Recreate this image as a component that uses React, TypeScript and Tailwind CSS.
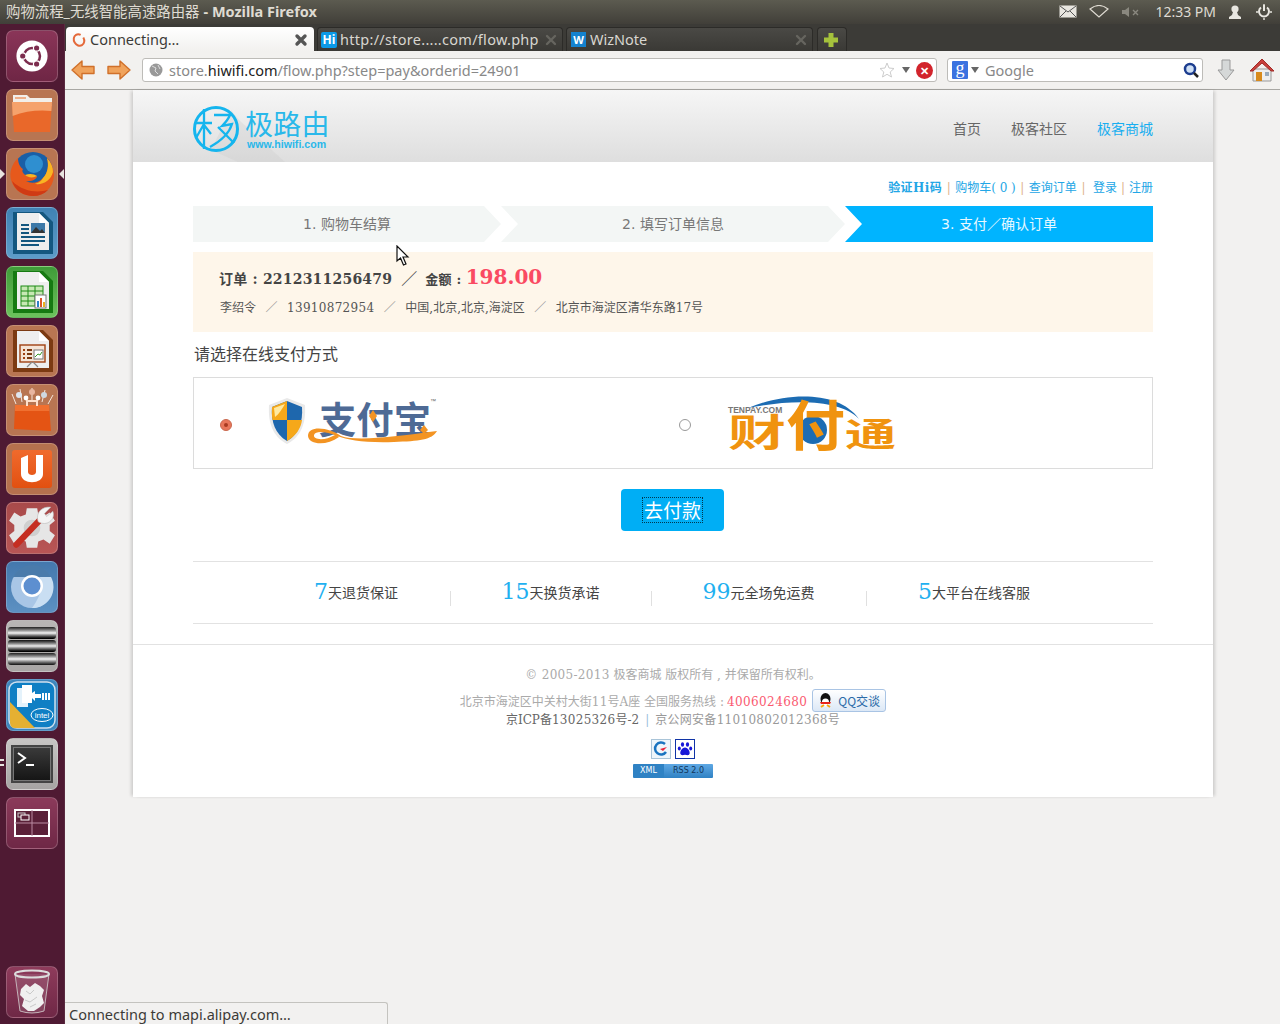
import React from "react";

function Tile({ cls, children, pip }: { cls: string; children: React.ReactNode; pip?: "ff" | "term" }) {
  return (
    <div className="relative w-full flex justify-center">
      {pip === "ff" && (
        <>
          <span className="absolute left-0 top-[21px] w-0 h-0 border-y-[5px] border-y-transparent border-l-[5px] border-l-[#e8e4e0]" />
          <span className="absolute right-0 top-[21px] w-0 h-0 border-y-[5px] border-y-transparent border-r-[5px] border-r-[#e8e4e0]" />
        </>
      )}
      {pip === "term" && (
        <span className="absolute left-0 top-[21px] w-[4px] h-[7px] border-y-2 border-[#e8e4e0]" />
      )}
      <div className={`w-[52px] h-[52px] rounded-[7px] flex items-center justify-center overflow-hidden border border-white/20 ${cls}`}>
        {children}
      </div>
    </div>
  );
}

function DocIcon({ dark, children }: { dark: string; children: React.ReactNode }) {
  return (
    <svg width="50" height="50" viewBox="0 0 50 50">
      <path d="M6 4H36L46 14V46H6Z" fill={dark} />
      <path d="M10 5H32L42 15V42H10Z" fill="#eeeeee" />
      <path d="M32 5L42 15H32Z" fill="#ffffff" />
      {children}
    </svg>
  );
}

function Launcher() {
  return (
    <aside className="w-[65px] shrink-0 bg-[#4f1a33] flex flex-col pt-[6px] pb-[6px] gap-[7px] border-r border-[#5a2a40]">
      <Tile cls="bg-gradient-to-b from-[#8a3558] to-[#6f2645]">
        <svg width="32" height="32" viewBox="0 0 38 38">
          <circle cx="19" cy="19" r="18.5" fill="#fff" />
          <circle cx="19" cy="19" r="9.5" fill="none" stroke="#7c2c4e" strokeWidth="3" />
          <circle cx="8" cy="19" r="3.8" fill="#7c2c4e" stroke="#fff" strokeWidth="1.4" />
          <circle cx="24.5" cy="9.5" r="3.8" fill="#7c2c4e" stroke="#fff" strokeWidth="1.4" />
          <circle cx="24.5" cy="28.5" r="3.8" fill="#7c2c4e" stroke="#fff" strokeWidth="1.4" />
        </svg>
      </Tile>
      <Tile cls="bg-[#b87552]">
        <svg width="46" height="42" viewBox="0 0 46 42">
          <path d="M4 1H18L21 4H43V12H4Z" fill="#f2efea" />
          <rect x="6" y="3" width="11" height="2" fill="#eeb08a" />
          <path d="M3 8H43L41 38H5Z" fill="#e9682a" />
          <path d="M3 8H43L42.4 17Q22 15 3.6 22Z" fill="#f5a26c" />
        </svg>
      </Tile>
      <Tile cls="bg-[#b87552]" pip="ff">
        <svg width="48" height="48" viewBox="0 0 48 48">
          <circle cx="25" cy="22" r="20" fill="#1a5fa6" />
          <circle cx="26" cy="14" r="9" fill="#2f8fd0" />
          <path d="M10 8C4 14 1 22 3 30C6 41 16 46 25 46C36 46 45 38 46 26C46 20 44 13 39 8C41 15 40 23 35 28C31 33 23 34 18 31C24 32 29 29 29 26C25 28 19 27 16 24C14 22 14 20 15 19C12 17 10 13 10 8Z" fill="#e6591c" />
          <path d="M39 8C41 15 40 23 35 28C33 32 29 33 27 34C36 35 43 30 45 22C45 17 43 12 39 8Z" fill="#f9b523" />
          <path d="M4 31C7 41 16 46 25 46C31 46 36 44 40 40C30 43 15 42 4 31Z" fill="#cf3a14" />
          <path d="M17 25C22 23 26 24 29 26C26 28 20 28 17 25Z" fill="#f9b523" />
        </svg>
      </Tile>
      <Tile cls="bg-gradient-to-b from-[#3f82b4] to-[#5d9cc9]">
        <DocIcon dark="#14577f">
          <rect x="14" y="16" width="8" height="2" fill="#14577f" />
          <rect x="14" y="20" width="8" height="2" fill="#14577f" />
          <rect x="14" y="24" width="8" height="2" fill="#14577f" />
          <rect x="24" y="15" width="14" height="10" fill="#3d79a8" />
          <path d="M24 25L29 19L33 23L35 21L38 25Z" fill="#333" />
          <rect x="14" y="28" width="24" height="2" fill="#14577f" />
          <rect x="14" y="32" width="24" height="2" fill="#14577f" />
          <rect x="14" y="36" width="18" height="2" fill="#14577f" />
        </DocIcon>
      </Tile>
      <Tile cls="bg-gradient-to-b from-[#3f9b38] to-[#6cc25c]">
        <DocIcon dark="#167a12">
          <rect x="14" y="19" width="22" height="20" fill="#c7e8b4" stroke="#1c8a14" />
          <path d="M14 24H36M14 29H36M14 34H36M21 19V39M28 19V39" stroke="#1c8a14" strokeWidth="1" />
          <rect x="28" y="28" width="11" height="13" fill="#fff" stroke="#777" />
          <rect x="30" y="34" width="2" height="6" fill="#2f80c8" />
          <rect x="33" y="31" width="2" height="9" fill="#d8562a" />
          <rect x="36" y="35" width="2" height="5" fill="#e8b020" />
        </DocIcon>
      </Tile>
      <Tile cls="bg-[#b87552]">
        <DocIcon dark="#7c3a12">
          <rect x="13" y="19" width="25" height="17" fill="#f5e4d6" stroke="#a04012" strokeWidth="1.4" />
          <rect x="16" y="23" width="2" height="2" fill="#a04012" />
          <rect x="16" y="27" width="2" height="2" fill="#a04012" />
          <rect x="16" y="31" width="2" height="2" fill="#a04012" />
          <rect x="20" y="23" width="5" height="2" fill="#7c3a12" />
          <rect x="20" y="27" width="5" height="2" fill="#7c3a12" />
          <rect x="20" y="31" width="5" height="2" fill="#7c3a12" />
          <rect x="27" y="24" width="9" height="9" fill="#fff" stroke="#777" />
          <path d="M28 31L31 28L33 29L35 26" stroke="#3a9a2a" fill="none" />
          <path d="M25 36L20 41M26 36L31 41" stroke="#888" strokeWidth="1.2" />
        </DocIcon>
      </Tile>
      <Tile cls="bg-[#b87552]">
        <svg width="48" height="48" viewBox="0 0 48 48">
          <path d="M8 18L4 8M14 16L12 3M24 15V2M34 16L37 4M40 18L45 9" stroke="#f5e6dc" strokeWidth="1" />
          <circle cx="11" cy="9" r="3" fill="#dfe6ef" />
          <circle cx="24" cy="6" r="3" fill="#e8b5a0" />
          <circle cx="36" cy="9" r="3" fill="#cfd8e0" />
          <circle cx="18" cy="12" r="2.4" fill="#fff" />
          <circle cx="30" cy="12" r="2.4" fill="#fff" />
          <path d="M7 19H41L43 45L6 43Z" fill="#e45414" />
          <path d="M7 19H41L41.4 25H7Z" fill="#f07030" />
          <path d="M19 20V15H29V20" fill="none" stroke="#ffe0cc" strokeWidth="2" />
        </svg>
      </Tile>
      <Tile cls="bg-[#b5714e]">
        <div className="w-[40px] h-[38px] rounded-[3px] bg-gradient-to-b from-[#f06a2c] to-[#e2500f] flex items-center justify-center">
          <svg width="26" height="30" viewBox="0 0 26 30">
            <path d="M2 4L9 1V18C9 22 17 22 17 18V1H24V20C24 31 2 31 2 20Z" fill="#fff" />
          </svg>
        </div>
      </Tile>
      <Tile cls="bg-gradient-to-b from-[#a84a4a] to-[#b85555]">
        <svg width="50" height="50" viewBox="0 0 48 48">
          <path d="M19 5H29L30 11L35 13L41 9L46 17L41 21V27L46 31L41 39L35 35L30 37L29 43H19L18 37L13 35L7 39L2 31L7 27V21L2 17L7 9L13 13L18 11Z" fill="#e6e6e6" />
          <circle cx="24" cy="24" r="8" fill="#cfcfcf" />
          <path d="M9 40L31 17" stroke="#c52e22" strokeWidth="6" strokeLinecap="round" />
          <path d="M30 18C27 10 33 3 42 4L36 10L38 13L44 8C47 16 38 23 30 18Z" fill="#f4f4f4" stroke="#bbb" strokeWidth="0.6" />
        </svg>
      </Tile>
      <Tile cls="bg-gradient-to-b from-[#4478ad] to-[#5c90c2]">
        <svg width="46" height="46" viewBox="0 0 46 46">
          <circle cx="23" cy="23" r="21" fill="#a9c6e6" />
          <path d="M4 13A21 21 0 0 1 42 13H23Z" fill="#4a7bab" />
          <path d="M23 44A21 21 0 0 0 42 13H31C35 24 30 34 23 44Z" fill="#c9def2" />
          <circle cx="23" cy="22" r="11" fill="#fff" />
          <circle cx="23" cy="22" r="8.5" fill="#5d8fd0" />
        </svg>
      </Tile>
      <Tile cls="bg-gradient-to-b from-[#b8b6b5] to-[#a9a6a5]">
        <div className="w-[48px] flex flex-col gap-[1px]">
          <div className="h-[12px] rounded-[3px] bg-gradient-to-b from-[#222] via-[#f5f5f5] to-[#000]" />
          <div className="h-[12px] rounded-[3px] bg-gradient-to-b from-[#111] via-[#eee] to-[#000]" />
          <div className="h-[12px] rounded-[3px] bg-gradient-to-b from-[#222] via-[#f5f5f5] to-[#111]" />
        </div>
      </Tile>
      <Tile cls="bg-[#3d86bd]">
        <svg width="50" height="50" viewBox="0 0 50 50">
          <rect x="2" y="2" width="46" height="46" rx="8" fill="#0f7fc4" stroke="#cfe0ee" strokeWidth="1.5" />
          <path d="M3 22L28 48H8Q3 48 3 42Z" fill="#e5b032" />
          <path d="M10 8H21V27H10Z" fill="#e4f2fb" />
          <path d="M15 5H25V23H15Z" fill="#fff" />
          <path d="M22 15L28 11V14H34V18H28V21Z" fill="#fff" />
          <path d="M36 13V20M39 13V20M42 13V20" stroke="#fff" strokeWidth="2" />
          <ellipse cx="35" cy="35" rx="11" ry="6.5" fill="none" stroke="#fff" />
          <text x="35" y="38" textAnchor="middle" fontSize="8" fill="#fff" fontFamily="Liberation Sans">intel</text>
        </svg>
      </Tile>
      <Tile cls="bg-gradient-to-b from-[#c7c5c4] to-[#a6a4a3]" pip="term">
        <div className="w-[42px] h-[38px] bg-[#777] border-2 border-[#444] p-[1px]">
          <div className="w-full h-full bg-gradient-to-b from-[#3a3a3a] to-[#161616] flex pt-[3px] pl-[3px]">
            <svg width="28" height="24" viewBox="0 0 28 24">
              <path d="M1 2L8 7L1 12" fill="none" stroke="#fff" strokeWidth="2" />
              <path d="M9 14H17" stroke="#fff" strokeWidth="2" />
            </svg>
          </div>
        </div>
      </Tile>
      <Tile cls="bg-gradient-to-b from-[#8b3a5a] to-[#6f2846]">
        <svg width="36" height="28" viewBox="0 0 36 28">
          <rect x="1" y="1" width="34" height="26" fill="#5a2038" stroke="#fff" strokeWidth="2" />
          <path d="M18 1V27M1 14H35" stroke="#b98aa0" strokeWidth="1" />
          <rect x="4" y="4" width="7" height="4" fill="none" stroke="#ccc" />
          <rect x="7" y="6" width="8" height="5" fill="#5a2038" stroke="#fff" />
        </svg>
      </Tile>
      <div className="mt-auto">
        <Tile cls="bg-gradient-to-b from-[#8e3b5b] to-[#6f2846]">
          <svg width="40" height="46" viewBox="0 0 38 46">
            <path d="M2 5L7 42Q19 46 31 42L36 5" fill="#c9a5b433" stroke="#c4b4ba" />
            <ellipse cx="19" cy="5" rx="17" ry="3.6" fill="none" stroke="#dcdcdc" strokeWidth="2" />
            <path d="M8 20L13 15L17 18L22 14L27 17L31 21L29 27L31 34L27 38L21 42H15L9 37L11 30L7 26Z" fill="#f0f0f0" />
            <path d="M13 22L17 25L21 21M12 31L17 33L24 28M17 38L23 35" stroke="#c9c9c9" fill="none" />
          </svg>
        </Tile>
      </div>
    </aside>
  );
}

function TabClose({ stroke, w }: { stroke: string; w: number }) {
  return (
    <svg width="14" height="14" viewBox="0 0 14 14" className="ml-auto">
      <path d="M3 3L11 11M11 3L3 11" stroke={stroke} strokeWidth={w} strokeLinecap="round" />
    </svg>
  );
}

function Tabs() {
  return (
    <div className="h-[27px] bg-[#3c3b37] flex items-end pl-[1px] gap-[3px] text-[14.5px] [font-family:'Noto_Sans',sans-serif]">
      <div className="w-[248px] h-[24px] rounded-t-[4px] bg-gradient-to-b from-white to-[#f2f1ef] flex items-center pl-[6px] pr-[6px] pt-[1px] text-[#3c3b37]">
        <svg width="14" height="16" viewBox="0 0 14 16" className="mr-[4px]">
          <ellipse cx="7" cy="8" rx="5" ry="6" fill="none" stroke="#e4693a" strokeWidth="2" strokeDasharray="30 5" transform="rotate(-30 7 8)" />
        </svg>
        <span>Connecting…</span>
        <TabClose stroke="#555" w={3.4} />
      </div>
      <div className="w-[246px] h-[24px] rounded-t-[4px] bg-gradient-to-b from-[#4a4945] to-[#3a3935] border border-b-0 border-[#2c2b28] flex items-center pl-[3px] pr-[4px] text-[#d8d6d0]">
        <span className="w-[16px] h-[16px] mr-[3px] rounded-[2px] bg-[#0b9ae8] text-white text-[12px] font-bold leading-[16px] text-center">Hi</span>
        <span className="tracking-[0.28px]">http://store.....com/flow.php</span>
        <TabClose stroke="#66655f" w={2.4} />
      </div>
      <div className="w-[247px] h-[24px] rounded-t-[4px] bg-gradient-to-b from-[#4a4945] to-[#3a3935] border border-b-0 border-[#2c2b28] flex items-center pl-[4px] pr-[4px] text-[#d8d6d0]">
        <span className="w-[15px] h-[15px] mr-[4px] bg-[#1482cf] text-white text-[11px] font-bold leading-[15px] text-center">W</span>
        <span>WizNote</span>
        <TabClose stroke="#66655f" w={2.4} />
      </div>
      <div className="ml-[1px] w-[30px] h-[24px] rounded-t-[4px] bg-gradient-to-b from-[#4a4945] to-[#3a3935] border border-b-0 border-[#2c2b28] flex items-center justify-center pr-[2px]">
        <svg width="16" height="16" viewBox="0 0 16 16">
          <path d="M5.5 1H10.5V5.5H15V10.5H10.5V15H5.5V10.5H1V5.5H5.5Z" fill="#a5c23c" />
        </svg>
      </div>
    </div>
  );
}

function Arrow({ flip }: { flip?: boolean }) {
  return (
    <svg width="24" height="20" viewBox="0 0 24 20" className={flip ? "-scale-x-100" : ""}>
      <path d="M11 1L1 10L11 19V13.5H23V6.5H11Z" fill="#f0a35c" stroke="#d0702a" strokeWidth="1.4" strokeLinejoin="round" />
    </svg>
  );
}

function Toolbar() {
  return (
    <div className="h-[39px] bg-[#f2f1ef] border-b border-[#a8a7a3] flex items-center pl-[6px] [font-family:'Noto_Sans',sans-serif] text-[14.5px]">
      <Arrow />
      <div className="ml-[12px]"><Arrow flip /></div>
      <div className="ml-[11px] w-[795px] h-[24px] bg-white border border-[#bdbcb8] rounded-[3px] flex items-center pl-[6px] pr-[3px]">
        <svg width="14" height="14" viewBox="0 0 14 14" className="mr-[6px]">
          <circle cx="7" cy="7" r="6.5" fill="#999" />
          <path d="M3 3L7 5L6 8L9 11M9 2L11 6" stroke="#ddd" fill="none" />
        </svg>
        <span className="text-[#888] translate-y-px">store.</span>
        <span className="text-[#222] translate-y-px">hiwifi.com</span>
        <span className="text-[#888] translate-y-px">/flow.php?step=pay&amp;orderid=24901</span>
        <svg width="18" height="18" viewBox="0 0 18 18" className="ml-auto">
          <path d="M9 2L11 7L16 7.5L12.2 11L13.5 16L9 13.3L4.5 16L5.8 11L2 7.5L7 7Z" fill="#fff" stroke="#ccc" />
        </svg>
        <span className="ml-[6px] w-0 h-0 border-x-[4px] border-x-transparent border-t-[6px] border-t-[#666]" />
        <span className="ml-[6px] w-[17px] h-[17px] rounded-full bg-[#d2242c] text-white text-[11px] font-bold leading-[17px] text-center">✕</span>
      </div>
      <div className="ml-[10px] w-[256px] h-[24px] bg-white border border-[#bdbcb8] rounded-[3px] flex items-center pl-[4px] pr-[2px]">
        <span className="w-[16px] h-[18px] rounded-[1px] bg-[#3a72e0] text-white text-[18px] leading-[15px] text-center [font-family:'Liberation_Serif',serif]">g</span>
        <span className="ml-[3px] w-0 h-0 border-x-[4px] border-x-transparent border-t-[6px] border-t-[#666]" />
        <span className="ml-[6px] text-[#888] translate-y-px">Google</span>
        <svg width="18" height="18" viewBox="0 0 18 18" className="ml-auto">
          <circle cx="8" cy="8" r="5" fill="#cfe0f5" stroke="#1c3d8f" strokeWidth="2.5" />
          <path d="M12 12L16 16" stroke="#222" strokeWidth="2.5" />
        </svg>
      </div>
      <svg width="20" height="24" viewBox="0 0 20 24" className="ml-[13px]">
        <path d="M6 2H14V12H18L10 22L2 12H6Z" fill="#d5d8d8" stroke="#999" />
      </svg>
      <svg width="26" height="24" viewBox="0 0 26 24" className="ml-[13px]">
        <path d="M4 11H22V23H4Z" fill="#eeeeee" stroke="#999" />
        <path d="M13 1L25 13L22 13L13 5L4 13L1 13Z" fill="#c8403c" stroke="#a02c28" />
        <rect x="7" y="14" width="6" height="9" fill="#d88a1c" />
        <rect x="16" y="14" width="4" height="4" fill="#9ab" />
      </svg>
    </div>
  );
}

function Logo() {
  return (
    <div className="relative flex items-center h-full pt-[6px]">
      <svg width="180" height="72" viewBox="0 0 180 72" className="absolute left-0 top-0">
        <path d="M38 20L46 30L92 72H45L18 60Z" fill="#c9c9c9" opacity="0.3" />
      </svg>
      <svg width="46" height="46" viewBox="0 0 46 46" className="relative">
        <circle cx="23" cy="23" r="21.5" fill="none" stroke="#15b5ee" strokeWidth="3" />
        <path d="M3 17H19M11 3V43M11 18L3 32M11 19L18 28M21 9H37C35 14 32 17 29 20L39 18C36 28 26 36 17 41M25 21L41 37" fill="none" stroke="#15b5ee" strokeWidth="2.3" />
      </svg>
      <div className="relative ml-[6px] flex flex-col items-start">
        <span className="text-[28px] leading-[30px] text-[#2ab8ea] tracking-[0.3px] [font-family:'Noto_Sans_CJK_SC',sans-serif]">极路由</span>
        <span className="ml-[2px] mt-[1px] text-[10.6px] leading-[11px] font-bold text-[#2ab8ea] [font-family:'Liberation_Sans',sans-serif]">www.hiwifi.com</span>
      </div>
    </div>
  );
}

function Step({ children, cls, clip }: { children: React.ReactNode; cls: string; clip: string }) {
  return <div className={`h-[36px] flex items-center justify-center ${cls} ${clip}`}>{children}</div>;
}

function Alipay() {
  return (
    <svg width="170" height="50" viewBox="0 0 170 50" className="overflow-visible">
      <path d="M18 0L36 7C37 24 33 38 18 46C3 38 -1 24 0 7Z" fill="#e9e9e9" />
      <path d="M18 3L33 9C34 24 30 36 18 43C6 36 2 24 3 9Z" fill="#1e67ad" />
      <path d="M18 3V22H3.4C2.8 18 2.8 14 3 9Z" fill="#f6a81a" />
      <path d="M18 22H33C32 30 27 38 18 43Z" fill="#f6a81a" />
      <path d="M5 10L16 6C13 11 10 16 6 19Z" fill="#ffe9a0" />
      <text x="50" y="36" fontSize="37" fontWeight="700" fill="#4e6a95" fontFamily="Noto Sans CJK SC" textLength="112" lengthAdjust="spacingAndGlyphs">支付宝</text>
      <path d="M104 12L108 18L104 24L100 18Z" fill="#f39423" />
      <path d="M155 27L159 32L155 36L151 32Z" fill="#f39423" />
      <path d="M39 38C39 26 62 30 72 38C88 44 130 38 168 33C163 42 150 43 125 44C95 45 80 42 68 38C58 34 47 32 45 37C44 42 56 43 66 37L70 39C58 48 40 47 39 38Z" fill="#f39423" />
      <text x="161" y="5" fontSize="6" fill="#666" fontFamily="Liberation Sans">™</text>
    </svg>
  );
}

function Tenpay() {
  return (
    <svg width="170" height="60" viewBox="0 0 170 60" className="overflow-visible">
      <path d="M20 15C55 0 110 -4 131 26C112 6 65 6 20 15Z" fill="#1c6cb3" />
      <text x="0" y="20" fontSize="8.5" fontWeight="700" fill="#777" fontFamily="Liberation Sans">TENPAY.COM</text>
      <text x="0" y="53" fontSize="38" fontWeight="700" fill="#f0930f" fontFamily="Noto Sans CJK SC" textLength="58" lengthAdjust="spacingAndGlyphs">财</text>
      <circle cx="85" cy="37" r="14" fill="#1c6cb3" />
      <text x="58" y="53" fontSize="54" fontWeight="700" fill="#f0930f" fontFamily="Noto Sans CJK SC" textLength="59" lengthAdjust="spacingAndGlyphs">付</text>
      <text x="117" y="53" fontSize="33" fontWeight="700" fill="#f0930f" fontFamily="Noto Sans CJK SC" textLength="51" lengthAdjust="spacingAndGlyphs">通</text>
    </svg>
  );
}

function Stat({ n, t, w, last }: { n: string; t: string; w: string; last?: boolean }) {
  return (
    <div className={`${w} flex items-center justify-center relative -translate-y-px`}>
      <span className="flex items-baseline -translate-x-px">
        <span className="text-[22px] text-[#1fb0f0] leading-none">{n}</span>
        <span className="text-[14px] text-[#444] leading-none -translate-y-px">{t}</span>
      </span>
      {!last && <span className="absolute right-0 top-[10px] w-px h-[15px] bg-[#e0e0e0]" />}
    </div>
  );
}

function Page() {
  const sl = "mx-[4.5px] text-[#e0b48c]";
  const digits = "tracking-[0.3px]";
  const sep = "mx-[9.5px] text-[#999]";
  return (
    <main className="w-[1080px] ml-[68px] bg-white self-start shadow-[-3px_0_3px_-1px_rgba(0,0,0,0.15),3px_0_3px_-1px_rgba(0,0,0,0.15)] [font-family:'DejaVu_Serif','Noto_Sans_CJK_SC',serif]">
      <header className="h-[72px] px-[60px] bg-gradient-to-b from-[#f6f6f6] to-[#dedede] flex items-center justify-between">
        <Logo />
        <nav className="flex gap-[30px] text-[14px] text-[#666] pt-[6px]">
          <span>首页</span>
          <span>极客社区</span>
          <span className="text-[#18aef0]">极客商城</span>
        </nav>
      </header>

      <div className="px-[60px]">
        <div className="h-[44px] flex items-end justify-end pb-[10px] text-[12px] leading-[16px] text-[#22a6e6]">
          <b className="tracking-[0.4px]">验证Hi码</b><span className={sl}>|</span>
          <span>购物车( 0 )</span><span className={sl}>|</span>
          <span>查询订单</span><span className={sl}>|</span>
          <span className="ml-[3px]">登录</span><span className="mx-[4px] text-[#e0b48c]">|</span>
          <span>注册</span>
        </div>

        <div className="flex text-[14px] text-[#777] [font-family:'DejaVu_Sans','Noto_Sans_CJK_SC',sans-serif]">
          <Step cls="w-[308px] bg-[#f3f6f5]" clip="[clip-path:polygon(0_0,291px_0,308px_50%,291px_100%,0_100%)]">1. 购物车结算</Step>
          <Step cls="w-[344px] bg-[#f3f6f5]" clip="[clip-path:polygon(0_0,327px_0,344px_50%,327px_100%,0_100%,17px_50%)]">2. 填写订单信息</Step>
          <Step cls="w-[308px] bg-[#00b4ff] text-[#e8f8ff]" clip="[clip-path:polygon(0_0,100%_0,100%_100%,0_100%,17px_50%)]">3. 支付／确认订单</Step>
        </div>

        <section className="mt-[10px] h-[80px] bg-[#fef6ea] pl-[27px] pt-[10px] text-[#444]">
          <div className="flex items-baseline h-[28px] -ml-px">
            <b className="text-[14px] tracking-[0.2px]">订单 : 2212311256479</b>
            <span className="ml-[9px] mr-[8px] text-[#444] text-[16px]">／</span>
            <b className="text-[13px] tracking-[0.3px]">金额 :</b>
            <b className="ml-[4px] text-[20px] text-[#fa4a62]">198.00</b>
          </div>
          <div className="mt-[9px] flex items-center text-[12px] text-[#555]">
            <span>李绍令</span>
            <span className={sep}>／</span>
            <span className={digits}>13910872954</span>
            <span className={sep}>／</span>
            <span>中国,北京,北京,海淀区</span>
            <span className={sep}>／</span>
            <span>北京市海淀区清华东路17号</span>
          </div>
        </section>

        <h2 className="mt-[11px] ml-[1px] text-[16px] leading-[24px] font-normal text-[#444]">请选择在线支付方式</h2>

        <div className="mt-[10px] h-[92px] border border-[#dcdcdc] flex items-center">
          <span className="ml-[26px] mt-[4px] w-[12px] h-[12px] rounded-full bg-[#e8765a] border border-[#c9694f] flex items-center justify-center">
            <span className="w-[4px] h-[4px] rounded-full bg-[#a83a20]" />
          </span>
          <div className="ml-[37px] flex"><Alipay /></div>
          <span className="ml-[240px] mt-[4px] w-[12px] h-[12px] rounded-full bg-white border border-[#999]" />
          <div className="ml-[37px] flex"><Tenpay /></div>
        </div>

        <div className="flex justify-center mt-[20px] pr-px">
          <button className="w-[103px] h-[42px] rounded-[4px] bg-[#00aef5] flex items-center justify-center">
            <span className="border border-dotted border-[#00384f] text-[19px] leading-[24px] px-[1px] text-white [font-family:'Noto_Sans_CJK_SC',sans-serif]">去付款</span>
          </button>
        </div>

        <div className="mt-[30px] h-[63px] border-y border-[#e2e2e2] pl-[70px] flex items-center">
          <Stat n="7" t="天退货保证" w="w-[188px]" />
          <Stat n="15" t="天换货承诺" w="w-[201px]" />
          <Stat n="99" t="元全场免运费" w="w-[215px]" />
          <Stat n="5" t="大平台在线客服" w="w-[216px]" last />
        </div>
      </div>

      <footer className="mt-[20px] h-[153px] border-t border-[#e2e2e2] flex flex-col items-center pt-[22px] text-[12px] text-[#aaa]">
        <div className="leading-[16px]"><span className={digits}>© 2005-2013</span> 极客商城 版权所有 , 并保留所有权利。</div>
        <div className="mt-[8px] flex items-center h-[22px]">
          <span>北京市海淀区中关村大街<span className={digits}>11</span>号A座 全国服务热线 :</span>
          <span className="ml-[3px] text-[#fa5a70] tracking-[0.4px]">4006024680</span>
          <span className="ml-[5px] -mt-[3px] w-[74px] h-[23px] rounded-[3px] border border-[#a9c4e4] bg-gradient-to-b from-white to-[#dce8f6] flex items-center pl-[4px] gap-[4px] text-[12px] text-[#2a6aa8] [font-family:'Noto_Sans_CJK_SC',sans-serif]">
            <svg width="17" height="17" viewBox="0 0 17 17" className="shrink-0">
              <ellipse cx="8.5" cy="7" rx="5" ry="6" fill="#111" />
              <ellipse cx="8.5" cy="10.5" rx="3.6" ry="4" fill="#fff" />
              <path d="M3 10H14L13 12H4Z" fill="#e8241c" />
              <path d="M4 15L7 13M13 15L10 13" stroke="#f5a70f" strokeWidth="2" />
            </svg>
            QQ交谈
          </span>
        </div>
        <div className="leading-[16px] mt-[-1px] text-[#999]">
          <span className="text-[#666]">京ICP备<span className={digits}>13025326</span>号-2</span>
          <span className="mx-[6px] text-[#9cc0dc]">|</span>
          <span className="tracking-[0.3px]">京公网安备11010802012368号</span>
        </div>
        <div className="mt-[11px] flex gap-[4px]">
          <span className="w-[20px] h-[20px] border border-[#a9c4d8] bg-[#eef6fb] flex items-center justify-center">
            <svg width="16" height="16" viewBox="0 0 16 16">
              <path d="M12 3A6 6 0 1 0 13 11" fill="none" stroke="#1a74c0" strokeWidth="2.5" />
              <path d="M7 8L14 6L10 10Z" fill="#e8243c" />
            </svg>
          </span>
          <span className="w-[20px] h-[20px] border border-[#1034a6] bg-white flex items-center justify-center">
            <svg width="16" height="16" viewBox="0 0 16 16" fill="#1616d8">
              <ellipse cx="5.5" cy="3.5" rx="1.6" ry="2.3" />
              <ellipse cx="10.5" cy="3.5" rx="1.6" ry="2.3" />
              <ellipse cx="2.3" cy="7.5" rx="1.5" ry="2" />
              <ellipse cx="13.7" cy="7.5" rx="1.5" ry="2" />
              <path d="M8 6.5C11 6.5 13.5 11 12.5 13C11.5 15 9.5 13.8 8 13.8C6.5 13.8 4.5 15 3.5 13C2.5 11 5 6.5 8 6.5Z" />
            </svg>
          </span>
        </div>
        <div className="mt-[5px] w-[80px] h-[14px] rounded-[1px] flex text-[8px] leading-[14px] text-white [font-family:'DejaVu_Sans',sans-serif] overflow-hidden">
          <span className="w-[31px] bg-[#2f82c4] text-center">XML</span>
          <span className="flex-1 bg-gradient-to-b from-[#5ea8e4] to-[#2f82c4] text-center text-[#12365a]">RSS 2.0</span>
        </div>
      </footer>
    </main>
  );
}

export default function App() {
  return (
    <div className="relative w-[1280px] h-[1024px] overflow-hidden flex flex-col bg-[#f2f1f0]">
      <div className="h-[24px] shrink-0 bg-gradient-to-b from-[#5c5b50] to-[#413f39] flex items-center pl-[6px] pr-[8px] pb-[1px] text-[#dfdbd2] text-[14px] [font-family:'Noto_Sans','Noto_Sans_CJK_SC',sans-serif]">
        <span className="text-[14.4px]">购物流程_无线智能高速路由器</span>
        <span className="ml-[4px] text-[14.5px] font-bold">- Mozilla Firefox</span>
        <svg width="18" height="13" viewBox="0 0 18 13" className="ml-auto">
          <rect x="0.5" y="0.5" width="17" height="12" fill="#e8e6e0" />
          <path d="M1 1L9 7L17 1M1 12L7 6M17 12L11 6" stroke="#555" fill="none" />
        </svg>
        <svg width="20" height="13" viewBox="0 0 20 13" className="ml-[12px]">
          <path d="M1 4Q10 -3 19 4L10 12Z" fill="none" stroke="#dfdbd2" strokeWidth="1.2" />
        </svg>
        <svg width="20" height="12" viewBox="0 0 20 12" className="ml-[12px]">
          <path d="M1 4H4L8 1V11L4 8H1Z" fill="#8a887f" />
          <path d="M12 4L17 9M17 4L12 9" stroke="#8a887f" strokeWidth="1.4" />
        </svg>
        <span className="ml-[14px] text-[#dfdbd2] font-normal">12:33 PM</span>
        <svg width="14" height="14" viewBox="0 0 14 14" className="ml-[12px]" fill="#e8e6e0">
          <circle cx="7" cy="4" r="3.6" />
          <path d="M5 7H9L10 10L13 12V14H1V12L4 10Z" />
        </svg>
        <svg width="16" height="16" viewBox="0 0 16 16" className="ml-[14px]">
          <path d="M8 1V7" stroke="#e8e6e0" strokeWidth="2" />
          <path d="M5 3.5A5 5 0 1 0 11 3.5" fill="none" stroke="#e8e6e0" strokeWidth="2" />
          <path d="M8 0V2M8 14V16M0 8H2M14 8H16" stroke="#e8e6e0" strokeWidth="1.4" />
        </svg>
      </div>
      <div className="flex-1 flex min-h-0">
        <Launcher />
        <div className="flex-1 flex flex-col min-w-0">
          <Tabs />
          <Toolbar />
          <div className="flex-1 flex">
            <Page />
          </div>
        </div>
      </div>

      <div className="absolute left-[65px] bottom-0 w-[323px] h-[22px] bg-[#f2f1f0] border border-b-0 border-l-0 border-[#c4c3bf] rounded-tr-[3px] pl-[4px] text-[14.5px] leading-[22px] text-[#3c3b37] [font-family:'Noto_Sans',sans-serif]">
        Connecting to mapi.alipay.com…
      </div>

      <svg width="14" height="21" viewBox="0 0 14 21" className="absolute left-[396px] top-[245px]">
        <path d="M1 1V16L4.5 13L7.5 20L10 19L7 12H12Z" fill="#fff" stroke="#111" strokeWidth="1.2" />
      </svg>
    </div>
  );
}
